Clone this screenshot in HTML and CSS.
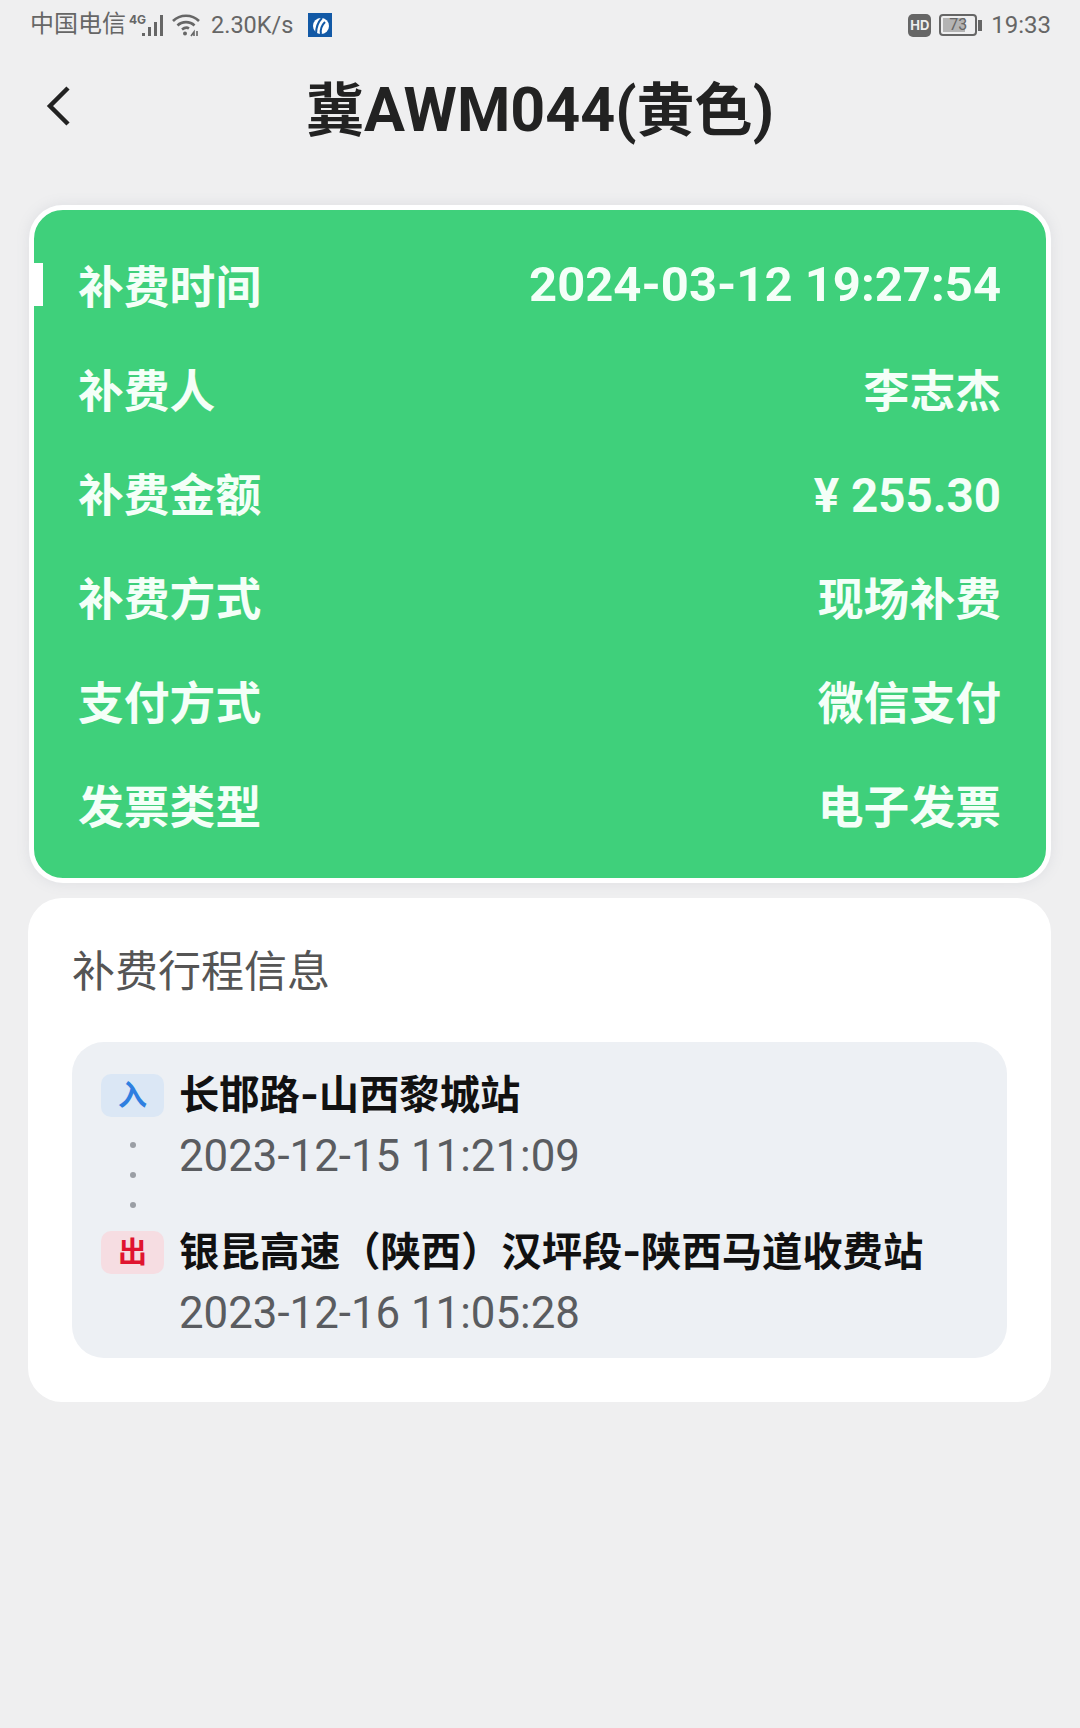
FILE: index.html
```html
<!DOCTYPE html>
<html lang="zh-CN">
<head>
  <meta charset="UTF-8" />
  <title>补费详情</title>
  <link rel="stylesheet" href="styles.css">
</head>
<body>
  <div class="status-bar">
    <div class="status-side">
      <span class="carrier">中国电信</span>
      <svg class="signal" width="38" height="24" viewBox="0 0 38 24">
        <text class="net-label" x="0" y="11">4G</text>
        <rect x="13" y="20" width="3" height="3" fill="#666"/>
        <rect x="19" y="14" width="3" height="9" fill="#666"/>
        <rect x="25" y="9" width="3" height="14" fill="#666"/>
        <rect x="31" y="2" width="3" height="21" fill="#666"/>
      </svg>
      <svg class="wifi" width="28" height="24" viewBox="0 0 28 24" fill="none" stroke="#666" stroke-width="2.6">
        <path d="M1 8 C8 1 20 1 27 8"/>
        <path d="M5.500 12.500 C10 8 18 8 22.500 12.500"/>
        <path d="M10 16.500 C12.500 14.500 15.500 14.500 17 15.500"/>
        <circle cx="13" cy="20.500" r="2" fill="#666" stroke="none"/>
        <path d="M19 23 l3 -4 v4 M25 18 v5" stroke-width="1.600"/>
      </svg>
      <span class="speed">2.30K/s</span>
      <svg class="app-logo" width="24" height="24" viewBox="0 0 24 24">
        <rect width="24" height="24" fill="#1259a6"/>
        <circle cx="13" cy="13" r="8" fill="#fff"/>
        <path d="M8 21 C8 14 10 9 14 5 M13 21 C12 16 14 12 17 9" stroke="#1259a6" stroke-width="2" fill="none"/>
      </svg>
    </div>
    <div class="status-side">
      <span class="hd-badge">HD</span>
      <div class="battery">
        <div class="battery-body">
          <div class="battery-fill" style="width: 73%"></div>
          <span class="battery-num">73</span>
        </div>
        <div class="battery-tip"></div>
      </div>
      <span class="clock">19:33</span>
    </div>
  </div>

  <header class="top-bar">
    <a class="back-btn">
      <svg width="26" height="42" viewBox="0 0 26 42" fill="none" stroke="#222" stroke-width="4.500">
        <path d="M22 3 L4 21 L22 39"/>
      </svg>
    </a>
    <h1>冀<span class="plate">AWM044(</span>黄色<span class="plate">)</span></h1>
  </header>

  <section class="pay-card">
    <span class="active-mark"></span>
    <div class="pay-row"><span class="pay-label">补费时间</span><span class="pay-value date">2024-03-12 19:27:54</span></div>
    <div class="pay-row"><span class="pay-label">补费人</span><span class="pay-value">李志杰</span></div>
    <div class="pay-row"><span class="pay-label">补费金额</span><span class="pay-value money">¥ 255.30</span></div>
    <div class="pay-row"><span class="pay-label">补费方式</span><span class="pay-value">现场补费</span></div>
    <div class="pay-row"><span class="pay-label">支付方式</span><span class="pay-value">微信支付</span></div>
    <div class="pay-row"><span class="pay-label">发票类型</span><span class="pay-value">电子发票</span></div>
  </section>

  <section class="trip-card">
    <h2>补费行程信息</h2>
    <div class="trip-box">
      <div class="stop">
        <div class="stop-side">
          <span class="badge in">入</span>
          <div class="dots"><i></i><i></i><i></i></div>
        </div>
        <div>
          <div class="stop-name">长邯路-山西黎城站</div>
          <div class="stop-time">2023-12-15 11:21:09</div>
        </div>
      </div>
      <div class="stop">
        <div class="stop-side">
          <span class="badge out">出</span>
        </div>
        <div>
          <div class="stop-name">银昆高速（陕西）汉坪段-陕西马道收费站</div>
          <div class="stop-time">2023-12-16 11:05:28</div>
        </div>
      </div>
    </div>
  </section>
</body>
</html>
```

FILE: styles.css
```css
* {
  box-sizing: border-box;
}

body {
  margin: 0;
  height: 1728px;
  overflow: hidden;
  background: #efeff0;
  font-family: Inter, "Noto Sans CJK SC", sans-serif;
  color: #111;
}

.status-bar {
  display: flex;
  justify-content: space-between;
  align-items: center;
  height: 50px;
  padding: 0 29px 0 30px;
  color: #666;
  font-size: 24px;
}

.status-side {
  display: flex;
  align-items: center;
}

.carrier {
  line-height: 46px;
  margin-bottom: 2px;
}

.signal {
  margin-left: 3px;
}

.net-label {
  font-size: 12px;
  font-weight: bold;
  fill: #666;
}

.wifi {
  margin-left: 5px;
}

.speed {
  margin-left: 11px;
  font-family: Roboto, sans-serif;
  font-size: 23.500px;
}

.app-logo {
  margin-left: 15px;
}

.hd-badge {
  width: 23px;
  height: 23px;
  border-radius: 5px;
  background: #666;
  color: #eee;
  font-size: 13px;
  font-weight: bold;
  line-height: 23px;
  text-align: center;
}

.battery {
  display: flex;
  align-items: center;
  margin-left: 8px;
}

.battery-body {
  position: relative;
  width: 38px;
  height: 22px;
  padding: 2px;
  border: 2px solid #666;
  border-radius: 4px;
}

.battery-fill {
  height: 100%;
  background: #b4b4b4;
}

.battery-num {
  position: absolute;
  top: 0;
  left: 0;
  width: 100%;
  font-family: Roboto, sans-serif;
  font-size: 16px;
  line-height: 18px;
  text-align: center;
}

.battery-tip {
  width: 4px;
  height: 11px;
  margin-left: 1px;
  background: #666;
}

.clock {
  margin-left: 9px;
  font-family: Roboto, sans-serif;
}

.top-bar {
  position: relative;
  display: flex;
  justify-content: center;
  align-items: center;
  height: 118px;
}

.back-btn {
  position: absolute;
  left: 46px;
  top: 35px;
  display: flex;
}

.top-bar h1 {
  margin: 0;
  padding-top: 2px;
  font-size: 58px;
  font-weight: bold;
  line-height: 76px;
  color: #222;
}

.plate {
  font-family: Roboto, sans-serif;
  font-size: 61px;
}

.pay-card {
  position: relative;
  width: 1022px;
  height: 678px;
  margin: 37px 0 0 29px;
  padding-top: 22px;
  background: #3fd07b;
  border: 5px solid #fff;
  border-radius: 34px;
  box-shadow: 0 0 14px rgba(120, 130, 150, 0.14);
}

.active-mark {
  position: absolute;
  left: 0;
  top: 53px;
  width: 9px;
  height: 43px;
  background: #fff;
}

.pay-row {
  display: flex;
  justify-content: space-between;
  align-items: center;
  height: 104px;
  padding: 0 45px 0 44px;
  color: #f4fff8;
  font-size: 45.800px;
  font-weight: bold;
}

.pay-value.date {
  font-family: Roboto, sans-serif;
  font-size: 49px;
}

.pay-value.money {
  padding-top: 8px;
  font-family: Roboto, "Noto Sans CJK SC", sans-serif;
  font-size: 47.500px;
}

.trip-card {
  position: relative;
  width: 1023px;
  height: 504px;
  margin: 15px 0 0 28px;
  padding: 40px 44px 0;
  background: #fff;
  border-radius: 34px;
}

.trip-card h2 {
  margin: 0;
  font-size: 43px;
  font-weight: normal;
  line-height: 66px;
  color: #555;
}

.trip-box {
  height: 316px;
  margin-top: 38px;
  padding: 25px 29px 0;
  background: #edf0f4;
  border-radius: 32px;
}

.stop {
  display: flex;
  gap: 15px;
  height: 157px;
}

.stop-side {
  display: flex;
  flex-direction: column;
  align-items: center;
  width: 63px;
}

.badge {
  width: 63px;
  height: 43px;
  margin-top: 7px;
  border-radius: 10px;
  font-size: 29px;
  font-weight: bold;
  line-height: 43px;
  text-align: center;
}

.badge.in {
  background: #dbe7f5;
  color: #2f7fe0;
}

.badge.out {
  background: #f6dde2;
  color: #e0142f;
}

.dots {
  display: flex;
  flex-direction: column;
  gap: 24px;
  margin-top: 25px;
}

.dots i {
  width: 6px;
  height: 6px;
  border-radius: 50%;
  background: #9a9ea4;
}

.stop-name {
  font-size: 40.300px;
  font-weight: bold;
  line-height: 56px;
  color: #111;
}

.stop-time {
  font-family: Roboto, sans-serif;
  font-size: 43.800px;
  line-height: 66px;
  color: #5a5c60;
}
```
